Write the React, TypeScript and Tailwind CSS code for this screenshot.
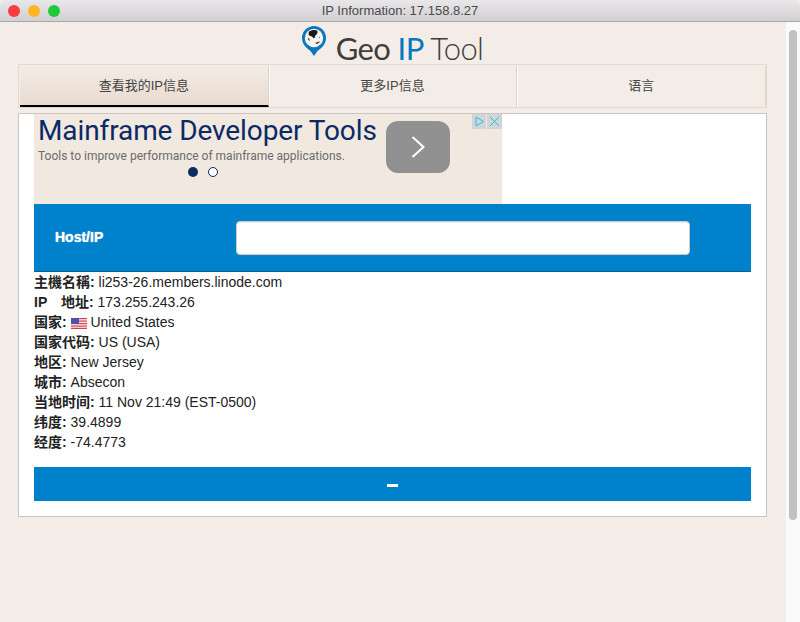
const CJK = "font-['Helvetica','Liberation_Sans','Noto_Sans_CJK_SC',sans-serif]";

function UsFlag() {
  return (
    <svg width="16" height="11" viewBox="0 0 16 11" className="inline-block align-[-2px]">
      <rect width="16" height="11" fill="#f4f0f4" />
      <rect y="0" width="16" height="1.2" fill="#d8404a" />
      <rect y="2.5" width="16" height="1.2" fill="#d8404a" />
      <rect y="5" width="16" height="1.2" fill="#d8404a" />
      <rect y="7.5" width="16" height="1.2" fill="#d8404a" />
      <rect y="9.8" width="16" height="1.2" fill="#d8404a" />
      <rect width="8" height="6" fill="#4a55a8" />
    </svg>
  );
}

function LogoPin() {
  return (
    <svg width="26" height="32" viewBox="0 0 26 32">
      <path d="M13 1a12 12 0 0 0-12 12c0 6.500 5 10.500 8.500 13L13 31l3.500-5c3.500-2.500 8.500-6.500 8.500-13A12 12 0 0 0 13 1z" fill="#0877bd" />
      <circle cx="13" cy="13" r="9.200" fill="#f6f2ee" />
      <path d="M8 6.500c2-1.500 6-2 8-1 1 1 .5 3-.5 4-1 .5-1.500 2-2 3.500-1 .5-2-.5-2.500-1.500-1-.5-2.500-.5-3.300-1.500-.2-1.500 0-3 .3-3.500z" fill="#1a1a1a" />
      <path d="M6.500 12.500l2 1.500.5 2-1.500-1zM14 18l4-1.500 1 .5-3 2zM18 11.500l1 1-.5 1z" fill="#333" />
    </svg>
  );
}

function Tab({ label, active, last }: { label: string; active?: boolean; last?: boolean }) {
  return (
    <div
      className={`flex-1 flex items-center justify-center text-[13px] text-[#444] ${
        active
          ? "bg-gradient-to-b from-[#f3ece6] to-[#e9dbd0] border-b-[2px] border-black"
          : "border-b-[2px] border-transparent"
      } ${last ? "border-r border-r-[#e0d6ca]" : "border-r border-r-[#d8d2cb] shadow-[1px_0_0_#ffffff]"}`}
    >
      {label}
    </div>
  );
}

function Row({ label, children }: { label: React.ReactNode; children: React.ReactNode }) {
  return (
    <div className="h-5 leading-5 whitespace-pre">
      <b className="font-bold">{label}:</b> {children}
    </div>
  );
}

export default function App() {
  return (
    <div className={`w-[800px] h-[622px] flex flex-col overflow-hidden bg-[#f4ede7] ${CJK}`}>
      {/* Title bar */}
      <div className="relative h-[22px] shrink-0 flex items-center justify-center rounded-t-[5px] bg-gradient-to-b from-[#e9e7e9] to-[#d1cfd1] border-b border-[#a9a7a8]">
        <div className="absolute left-[8px] top-[5px] flex gap-[8px]">
          <span className="w-3 h-3 rounded-full bg-[#fc3b43]" />
          <span className="w-3 h-3 rounded-full bg-[#fdb524]" />
          <span className="w-3 h-3 rounded-full bg-[#21c93a]" />
        </div>
        <span className="text-[13px] text-[#4a4a4a] font-['Helvetica','Liberation_Sans',sans-serif] leading-none">
          IP Information: 17.158.8.27
        </span>
      </div>

      <div className="flex flex-1 min-h-0">
        <div className="flex-1 px-[18px] flex flex-col">
          {/* Logo */}
          <div className="h-[42px] shrink-0 flex items-start justify-center">
            <div className="flex items-start gap-[9px] ml-[-1px] mt-[3px]">
              <LogoPin />
              <div className="font-['Lato',sans-serif] text-[31px] leading-none mt-[8px] tracking-[-0.6px] text-[#3e3e3e]">
                Geo <span className="text-[#0877bd] font-normal">IP</span>{" "}
                <span className="font-light">Tool</span>
              </div>
            </div>
          </div>

          {/* Tabs */}
          <div className="h-[44px] shrink-0 flex border border-[#e2d8cc] pl-px pt-px">
            <Tab label="查看我的IP信息" active />
            <Tab label="更多IP信息" />
            <Tab label="语言" last />
          </div>

          {/* Panel */}
          <div className="mt-[5px] h-[404px] bg-white border border-[#c9c6c2] px-[15px] text-[14px] text-[#222]">
            {/* Ad */}
            <div className="relative w-[468px] h-[90px] bg-[#f1e8e0] font-['Roboto',sans-serif]">
              <div className="absolute left-[4px] top-[0px] text-[28px] leading-[34px] text-[#0a2a66] tracking-[-0.1px]">
                Mainframe Developer Tools
              </div>
              <div className="absolute left-[4px] top-[34px] text-[12px] leading-[16px] text-[#6b6b6b]">
                Tools to improve performance of mainframe applications.
              </div>
              <div className="absolute left-[154px] top-[53px] flex gap-[10px]">
                <span className="w-[10px] h-[10px] rounded-full bg-[#0a2a66]" />
                <span className="w-[10px] h-[10px] rounded-full border border-[#0a2a66] bg-white" />
              </div>
              <div className="absolute left-[352px] top-[7px] w-[64px] h-[52px] rounded-[12px] bg-[#919191] flex items-center justify-center">
                <svg width="16" height="24" viewBox="0 0 16 24" fill="none" stroke="#fff" strokeWidth="2">
                  <path d="M2.500 2l11 10-11 10" />
                </svg>
              </div>
              <div className="absolute right-0 top-0 flex gap-px">
                <span className="w-[14px] h-[15px] bg-[#cfd5d8] flex items-center justify-center">
                  <svg width="11" height="11" viewBox="0 0 11 11" fill="none" stroke="#25c2dd" strokeWidth="1">
                    <path d="M2 1v9l7.500-4.500z" />
                  </svg>
                </span>
                <span className="w-[15px] h-[15px] bg-[#cfd5d8] flex items-center justify-center">
                  <svg width="11" height="11" viewBox="0 0 11 11" fill="none" stroke="#25c2dd" strokeWidth="1">
                    <path d="M1 1l9 9M10 1l-9 9" />
                  </svg>
                </span>
              </div>
            </div>

            {/* Host input */}
            <div className="h-[68px] bg-[#0081cc] border-b border-[#0a5f94] flex items-center">
              <label className="w-[202px] pl-[21px] font-bold text-white text-[14px] [text-shadow:0_0_1px_#fff]">
                Host/IP
              </label>
              <input
                type="text"
                className="w-[454px] h-[34px] rounded-[4px] bg-white border border-[#cccccc] shadow-[inset_0_1px_1px_rgba(0,0,0,0.08)] outline-none"
              />
            </div>

            {/* Info */}
            <div className="h-[195px]">
              <Row label="主機名稱">li253-26.members.linode.com</Row>
              <Row label={<>IP{"\u3000"}地址</>}>173.255.243.26</Row>
              <Row label="国家">
                <UsFlag /> United States
              </Row>
              <Row label="国家代码">US (USA)</Row>
              <Row label="地区">New Jersey</Row>
              <Row label="城市">Absecon</Row>
              <Row label="当地时间">11 Nov 21:49 (EST-0500)</Row>
              <Row label="纬度">39.4899</Row>
              <Row label="经度">-74.4773</Row>
            </div>

            {/* Collapse bar */}
            <div className="h-[34px] bg-[#0081cc] flex items-center justify-center">
              <span className="w-[11px] h-[3px] mt-[2px] bg-white" />
            </div>
          </div>
        </div>

        {/* Scrollbar */}
        <div className="w-[15px] shrink-0 bg-[#fafafa] border-l border-[#efefef] pl-[3px] pt-[8px]">
          <div className="w-[8px] h-[490px] rounded-full bg-[#c1c1c1]" />
        </div>
      </div>
    </div>
  );
}
